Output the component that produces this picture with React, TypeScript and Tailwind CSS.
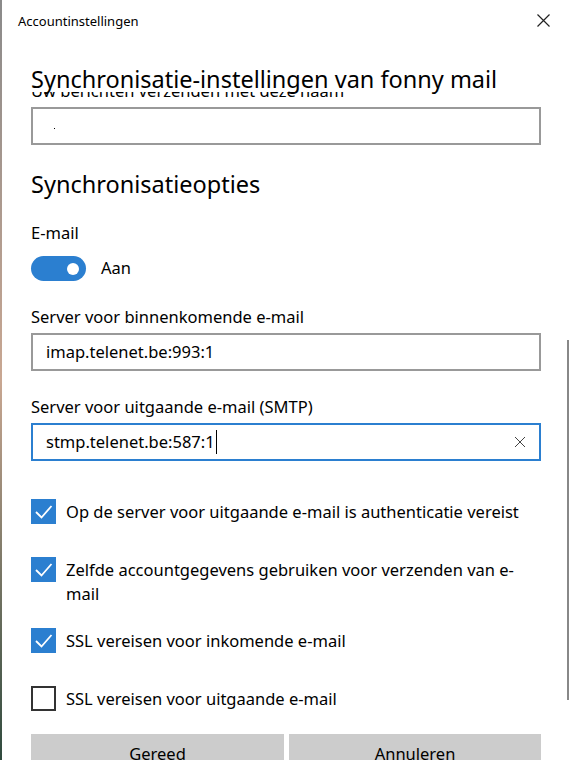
import React from "react";

const BLUE = "bg-[#2b7fd0]";

function CheckIcon() {
  return (
    <svg width="25" height="25" viewBox="0 0 25 25" fill="none">
      <polyline points="5,13 10.5,18.5 20.5,7" stroke="white" strokeWidth="1.8" />
    </svg>
  );
}

interface CheckRowProps {
  checked: boolean;
  children: React.ReactNode;
  className?: string;
}

function CheckRow({ checked, children, className }: CheckRowProps) {
  return (
    <div className={`flex items-start gap-[10px] ${className ?? ""}`}>
      {checked ? (
        <div className={`w-[25px] h-[25px] shrink-0 ${BLUE}`}>
          <CheckIcon />
        </div>
      ) : (
        <div className="w-[25px] h-[25px] shrink-0 border-2 border-[#333] bg-white" />
      )}
      <div className="text-[16.5px] leading-[24px] pt-[1px] text-black pr-6">{children}</div>
    </div>
  );
}

function TextBox({
  value,
  focused,
  className,
}: {
  value: string;
  focused?: boolean;
  className?: string;
}) {
  return (
    <div
      className={`h-[38px] w-[510px] border-2 flex items-center pl-[13px] pr-[12px] ${
        focused ? "border-[#2b7fd0]" : "border-[#999]"
      } ${className ?? ""}`}
    >
      <span className="text-[16.5px] text-black">{value}</span>
      {focused && <span className="w-px h-[24px] bg-black ml-px" />}
      {focused && (
        <svg className="ml-auto mr-[1px]" width="12" height="12" viewBox="0 0 12 12">
          <path d="M1 1 L11 11 M11 1 L1 11" stroke="#444" strokeWidth="1" />
        </svg>
      )}
    </div>
  );
}

export default function App() {
  return (
    <div
      className="flex h-[760px] w-[569px] overflow-hidden bg-white text-black"
      style={{ fontFamily: '"Segoe UI", "Noto Sans", "Open Sans", sans-serif' }}
    >
      <div className="w-[2px] shrink-0 bg-gradient-to-b from-[#8a8a8a] via-[#c9a792] to-[#2f4a3e]" />
      <div className="relative flex-1 flex flex-col">
        <div className="h-[41px] shrink-0 flex items-center justify-between pl-[16px] pr-[19px]">
          <span className="text-[13px] leading-[18px]">Accountinstellingen</span>
          <svg width="13" height="13" viewBox="0 0 13 13">
            <path d="M0.5 0.5 L12.5 12.5 M12.5 0.5 L0.5 12.5" stroke="#222" strokeWidth="1.2" />
          </svg>
        </div>

        <div className="pl-[29px] flex flex-col">
          <h1 className="mt-[21px] -mb-[4px] text-[23.5px] leading-[34px] font-normal relative z-10">
            Synchronisatie-instellingen van fonny mail
          </h1>
          <div className="h-[5px] overflow-hidden">
            <div className="-mt-[12px] text-[16.5px] leading-[22px]">Uw berichten verzenden met deze naam</div>
          </div>
          <div className="mt-[10px] h-[38px] w-[510px] border-2 border-[#999] relative">
            <span className="absolute left-[21px] top-[19px] w-px h-px bg-black" />
          </div>

          <h2 className="mt-[24px] text-[23.5px] leading-[30px]">Synchronisatieopties</h2>
          <div className="mt-[23px] text-[16.5px] leading-[22px]">E-mail</div>
          <div className="mt-[12px] flex items-center">
            <div className={`w-[55px] h-[25px] rounded-full ${BLUE} flex items-center justify-end pr-[7px]`}>
              <div className="w-[12px] h-[12px] rounded-full bg-white" />
            </div>
            <span className="ml-[15px] text-[16.5px]">Aan</span>
          </div>

          <div className="mt-[25px] text-[16.5px] leading-[22px]">Server voor binnenkomende e-mail</div>
          <TextBox className="mt-[5px]" value="imap.telenet.be:993:1" />

          <div className="mt-[25px] text-[16.5px] leading-[22px]">Server voor uitgaande e-mail (SMTP)</div>
          <TextBox className="mt-[5px]" value="stmp.telenet.be:587:1" focused />

          <CheckRow className="mt-[38px]" checked>
            Op de server voor uitgaande e-mail is authenticatie vereist
          </CheckRow>
          <CheckRow className="mt-[33px]" checked>
            Zelfde accountgegevens gebruiken voor verzenden van e-mail
          </CheckRow>
          <CheckRow className="mt-[22px]" checked>
            SSL vereisen voor inkomende e-mail
          </CheckRow>
          <CheckRow className="mt-[33px]" checked={false}>
            SSL vereisen voor uitgaande e-mail
          </CheckRow>

          <div className="mt-[23px] flex gap-[5px]">
            <button className="w-[253px] h-[40px] bg-[#ccc] text-[16.5px]">Gereed</button>
            <button className="w-[252px] h-[40px] bg-[#ccc] text-[16.5px]">Annuleren</button>
          </div>
        </div>

        <div className="absolute right-0 top-[340px] w-[2px] h-[360px] bg-[#888]" />
      </div>
    </div>
  );
}
